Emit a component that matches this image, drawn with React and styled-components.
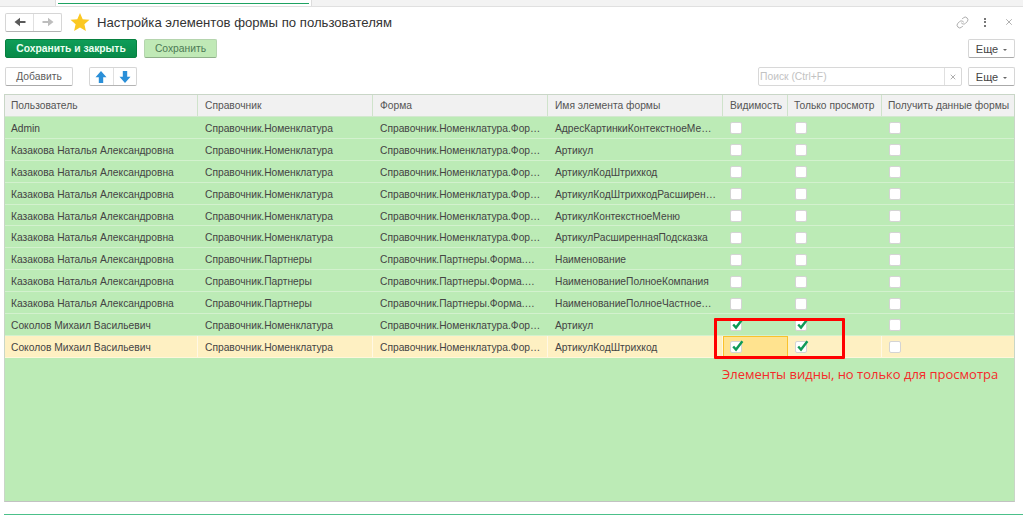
import React from "react";
import styled, { createGlobalStyle } from "styled-components";
import { Link, X } from "lucide-react";

const Global = createGlobalStyle`
  html, body {
    margin: 0;
    background: #fff;
    font-family: "Liberation Sans", Arial, sans-serif;
  }
`;

const Page = styled.div`
  width: 1023px;
  height: 515px;
  overflow: hidden;
  display: flex;
  flex-direction: column;
`;

const TopStrip = styled.div`
  height: 6px;
  background: #f3f3f3;
  border-bottom: 1px solid #e0e0e0;
  padding-left: 55px;
  flex-shrink: 0;
`;
const OpenTab = styled.div`
  width: 257px;
  height: 6px;
  background: #fff;
  border-left: 1px solid #ddd;
  border-right: 1px solid #ddd;
  box-sizing: border-box;
  padding: 3px 2px 0;
  &::before {
    content: "";
    display: block;
    height: 1px;
    background: #1ea362;
  }
`;

const TitleRow = styled.div`
  display: flex;
  align-items: center;
  height: 20px;
  margin-top: 5px;
  padding: 0 8px 0 5px;
`;
const NavGroup = styled.div`
  display: flex;
  width: 57px;
  height: 19px;
  box-sizing: border-box;
  border: 1px solid #d6d6d6;
  border-bottom-color: #b4b4b4;
  border-radius: 2px;
  background: #fff;
`;
const NavButton = styled.div`
  flex: 1;
  display: flex;
  align-items: center;
  justify-content: center;
  color: ${({ $off }) => ($off ? "#bdbdbd" : "#5a5a5a")};
  & + & {
    border-left: 1px solid #e0e0e0;
  }
`;
const Glyph = styled.svg`
  width: 12px;
  height: 12px;
  fill: currentColor;
  transform: rotate(${({ $turn }) => $turn || 0}deg);
`;
const StarIcon = styled.svg`
  width: 20px;
  height: 20px;
  margin-left: 8px;
`;
const Title = styled.h1`
  margin: 0 0 0 7px;
  font-size: 13.15px;
  font-weight: 400;
  color: #333;
  white-space: nowrap;
`;
const WindowTools = styled.div`
  margin-left: auto;
  display: flex;
  align-items: center;
  gap: 15px;
  color: #9a9a9a;
  padding-right: 1px;
`;
const Dots = styled.span`
  display: flex;
  flex-direction: column;
  gap: 1.5px;
  & i {
    width: 2.5px;
    height: 2px;
    background: #777;
  }
`;
const CloseIcon = styled(X)`
  margin-left: 3px;
  color: #888;
`;

const ToolRow = styled.div`
  display: flex;
  align-items: center;
  height: 19px;
  margin-top: ${({ $gap }) => $gap}px;
  padding: 0 8px 0 5px;
`;
const Button = styled.button`
  height: 19px;
  width: ${({ $w }) => $w}px;
  padding: 0;
  margin-left: ${({ $ml }) => $ml || 0}px;
  box-sizing: border-box;
  font: ${({ $bold }) => ($bold ? 700 : 400)} 10.3px "Liberation Sans", Arial, sans-serif;
  border-radius: 2px;
  border: 1px solid #d6d6d6;
  border-bottom-color: #aaa;
  background: #fff;
  color: #5c5c5c;
`;
const PrimaryButton = styled(Button)`
  background: linear-gradient(#0f9d58, #078a48);
  border: 1px solid #07803f;
  color: #eafff2;
`;
const SoftButton = styled(Button)`
  background: #c0e9b6;
  border: 1px solid #b5d5ae;
  border-bottom-color: #8fb089;
  color: #4c7a55;
`;
const MoreButton = styled(Button)`
  width: 47px;
  font-size: 11px;
  color: #444;
  &::after {
    content: "";
    display: inline-block;
    margin-left: 5px;
    vertical-align: 2px;
    border: 2.5px solid transparent;
    border-top-color: #666;
    border-bottom: 0;
  }
`;
const Spacer = styled.div`
  flex: 1;
`;
const ArrowGroup = styled(NavGroup)`
  width: 48px;
  margin-left: 16px;
`;
const ArrowButton = styled(NavButton)`
  color: #2a8fd8;
`;
const Search = styled.div`
  width: 204px;
  height: 19px;
  box-sizing: border-box;
  display: flex;
  align-items: stretch;
  border: 1px solid #d8d8d8;
  border-radius: 2px;
  background: #fff;
`;
const SearchText = styled.div`
  flex: 1;
  font-size: 10.3px;
  line-height: 17px;
  padding-left: 1px;
  color: #c2c2c2;
`;
const SearchClear = styled.div`
  width: 16px;
  display: flex;
  align-items: center;
  justify-content: center;
  border-left: 1px solid #e0e0e0;
  color: #777;
`;

const TableWrap = styled.div`
  position: relative;
  width: 1011px;
  height: 408px;
  margin: 8px 0 0 4px;
  box-sizing: border-box;
  border: 1px solid #c9d6c7;
  border-bottom-color: #c2c2c2;
  background: #bcebb6;
  flex-shrink: 0;
`;
const COLS = "193px 175px 175px 175px 65px 94px 1fr";
const HeadRow = styled.div`
  display: grid;
  grid-template-columns: ${COLS};
  height: 22px;
  box-sizing: border-box;
  background: #f1f1f1;
  border-bottom: 1px solid #d3e8cf;
`;
const HeadCell = styled.div`
  font-size: 10.25px;
  line-height: 21px;
  padding-left: ${({ $pad }) => $pad}px;
  color: #555;
  white-space: nowrap;
  border-right: 1px solid #cfe3cb;
  &:last-child {
    border-right: 0;
  }
`;
const Row = styled.div`
  display: grid;
  grid-template-columns: ${COLS};
  height: 21.9px;
  box-sizing: border-box;
  border-bottom: 1px solid ${({ $active }) => ($active ? "#fff6da" : "#d3f1ce")};
  background: ${({ $active }) => ($active ? "#fef0c2" : "transparent")};
`;
const Cell = styled.div`
  font-size: 10.25px;
  line-height: 22px;
  padding: 1px 5px 0 7px;
  min-width: 0;
  color: #444;
  white-space: nowrap;
  overflow: hidden;
  text-overflow: ellipsis;
  border-right: 1px solid ${({ $active }) => ($active ? "#fff8e4" : "transparent")};
  &:first-child {
    padding-left: 6px;
  }
`;
const BoxCell = styled.div`
  display: flex;
  align-items: center;
  padding: 2px 0 0 7px;
  box-sizing: border-box;
  ${({ $focus }) =>
    $focus &&
    `
    background: #ffe38f;
    border: 1px solid #fac22c;
    padding-left: 6px;
  `}
  ${({ $focus, $active }) => !$focus && $active && "border-right: 1px solid #fff8e4;"}
`;
const Box = styled.div`
  width: 12px;
  height: 12px;
  box-sizing: border-box;
  background: #fff;
  border: 1px solid #d4d4d4;
  border-radius: 2px;
  position: relative;
`;
const Tick = styled.svg`
  position: absolute;
  left: 0;
  top: -2px;
  width: 13px;
  height: 12px;
  fill: none;
  stroke: #0f9a58;
  stroke-width: 2.4;
`;

const Frame = styled.div`
  position: absolute;
  left: 709px;
  top: 223px;
  width: 131px;
  height: 41px;
  box-sizing: border-box;
  border: 3px solid #ff0000;
  border-radius: 1px;
  pointer-events: none;
`;
const Note = styled.div`
  position: absolute;
  left: 717px;
  top: 272px;
  font-family: "Open Sans", sans-serif;
  font-size: 13px;
  line-height: 15px;
  color: #f52a2a;
  white-space: nowrap;
`;
const BottomLine = styled.div`
  height: 1px;
  margin: 12px 0 0 4px;
  background: #4cc08a;
  flex-shrink: 0;
`;

const NOM = "Справочник.Номенклатура";
const NOM_FORM = "Справочник.Номенклатура.ФормаЭлемента";
const PART = "Справочник.Партнеры";
const PART_FORM = "Справочник.Партнеры.Форма.ФормаЭлемента";
const KAZ = "Казакова Наталья Александровна";
const SOK = "Соколов Михаил Васильевич";

const rows = [
  ["Admin", NOM, NOM_FORM, "АдресКартинкиКонтекстноеМенюДополнение"],
  [KAZ, NOM, NOM_FORM, "Артикул"],
  [KAZ, NOM, NOM_FORM, "АртикулКодШтрихкод"],
  [KAZ, NOM, NOM_FORM, "АртикулКодШтрихкодРасширеннаяПодсказка"],
  [KAZ, NOM, NOM_FORM, "АртикулКонтекстноеМеню"],
  [KAZ, NOM, NOM_FORM, "АртикулРасширеннаяПодсказка"],
  [KAZ, PART, PART_FORM, "Наименование"],
  [KAZ, PART, PART_FORM, "НаименованиеПолноеКомпания"],
  [KAZ, PART, PART_FORM, "НаименованиеПолноеЧастноеЛицо"],
  [SOK, NOM, NOM_FORM, "Артикул", true],
  [SOK, NOM, NOM_FORM, "АртикулКодШтрихкод", true, true],
];

const heads = [
  ["Пользователь", 6],
  ["Справочник", 7],
  ["Форма", 7],
  ["Имя элемента формы", 7],
  ["Видимость", 7],
  ["Только просмотр", 6],
  ["Получить данные формы", 6],
];

function SideArrow({ turn }) {
  return (
    <Glyph viewBox="0 0 12 12" $turn={turn}>
      <path d="M.5 6 6 1.8v3.1h5.5v2.2H6v3.1z" />
    </Glyph>
  );
}

function BlockArrow({ turn }) {
  return (
    <Glyph viewBox="0 0 12 12" $turn={turn}>
      <path d="M6 0l5.5 6.2H8.2V12H3.8V6.2H.5z" />
    </Glyph>
  );
}

function CheckBox({ checked }) {
  return (
    <Box>
      {checked && (
        <Tick viewBox="0 0 13 12">
          <path d="M2.2 6.5 5 9.6 11.4 1.2" />
        </Tick>
      )}
    </Box>
  );
}

export default function App() {
  return (
    <Page>
      <Global />
      <TopStrip>
        <OpenTab />
      </TopStrip>
      <TitleRow>
        <NavGroup>
          <NavButton>
            <SideArrow />
          </NavButton>
          <NavButton $off>
            <SideArrow turn={180} />
          </NavButton>
        </NavGroup>
        <StarIcon viewBox="0 0 20 20">
          <path d="M10 1l2.7 6.2 6.8.6-5.1 4.5 1.5 6.6L10 15.4l-5.9 3.5 1.5-6.6L.5 7.8l6.8-.6z" fill="#fbc822" />
        </StarIcon>
        <Title>Настройка элементов формы по пользователям</Title>
        <WindowTools>
          <Link size={13} strokeWidth={1.5} />
          <Dots>
            <i />
            <i />
            <i />
          </Dots>
          <CloseIcon size={10} strokeWidth={1.6} />
        </WindowTools>
      </TitleRow>
      <ToolRow $gap={7}>
        <PrimaryButton $w={132} $bold>
          Сохранить и закрыть
        </PrimaryButton>
        <SoftButton $w={73} $ml={7}>
          Сохранить
        </SoftButton>
        <Spacer />
        <MoreButton>Еще</MoreButton>
      </ToolRow>
      <ToolRow $gap={9}>
        <Button $w={68}>Добавить</Button>
        <ArrowGroup>
          <ArrowButton>
            <BlockArrow />
          </ArrowButton>
          <ArrowButton>
            <BlockArrow turn={180} />
          </ArrowButton>
        </ArrowGroup>
        <Spacer />
        <Search>
          <SearchText>Поиск (Ctrl+F)</SearchText>
          <SearchClear>
            <X size={8} strokeWidth={1.8} />
          </SearchClear>
        </Search>
        <MoreButton $ml={6}>Еще</MoreButton>
      </ToolRow>
      <TableWrap>
        <HeadRow>
          {heads.map(([h, pad]) => (
            <HeadCell key={h} $pad={pad}>
              {h}
            </HeadCell>
          ))}
        </HeadRow>
        {rows.map(([user, dict, form, name, checked, active], i) => (
          <Row key={i} $active={active}>
            <Cell $active={active}>{user}</Cell>
            <Cell $active={active}>{dict}</Cell>
            <Cell $active={active}>{form}</Cell>
            <Cell $active={active}>{name}</Cell>
            <BoxCell $focus={active} $active={active}>
              <CheckBox checked={checked} />
            </BoxCell>
            <BoxCell $active={active}>
              <CheckBox checked={checked} />
            </BoxCell>
            <BoxCell>
              <CheckBox />
            </BoxCell>
          </Row>
        ))}
        <Frame />
        <Note>Элементы видны, но только для просмотра</Note>
      </TableWrap>
      <BottomLine />
    </Page>
  );
}
